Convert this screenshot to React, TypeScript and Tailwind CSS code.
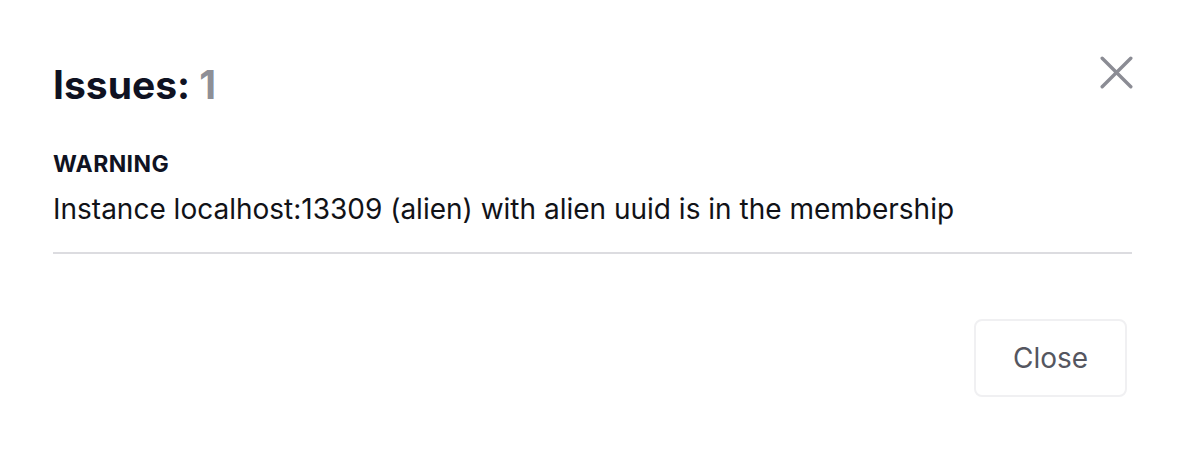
import React from 'react';

function App() {
  return (
    <div className="h-[456px] w-[1188px] bg-white font-['Inter',sans-serif]">
      <div className="flex flex-col pl-[53px] pr-[56px] pt-[56px]">
        {/* Header */}
        <div className="flex items-start justify-between">
          <h2 className="mt-[5px] text-[39px] font-bold leading-[48px] text-[#0f1222]">
            Issues: <span className="text-[#8e8f96]">1</span>
          </h2>
          <button className="mr-[-1px] text-[#8b8c94]">
            <svg width="33" height="33" viewBox="0 0 33 33" fill="none" stroke="currentColor" strokeWidth="3.4" strokeLinecap="round">
              <path d="M2.2 2.2L30.8 30.8M30.8 2.2L2.2 30.8" />
            </svg>
          </button>
        </div>

        {/* Issue */}
        <div className="mt-[39px] border-b-2 border-[#dcdce0] pb-[23px]">
          <div className="text-[23px] font-bold leading-[32px] tracking-[0.4px] text-[#0f1222]">WARNING</div>
          <div className="mt-[9px] text-[28px] leading-[40px] text-[#111217]">
            Instance localhost:13309 (alien) with alien uuid is in the membership
          </div>
        </div>

        {/* Footer */}
        <div className="mt-[65px] flex justify-end pr-[5px]">
          <button className="h-[78px] w-[153px] rounded-[8px] border-2 border-[#f0f0f2] text-[28px] text-[#55565f]">
            Close
          </button>
        </div>
      </div>
    </div>
  );
}

export default App;
